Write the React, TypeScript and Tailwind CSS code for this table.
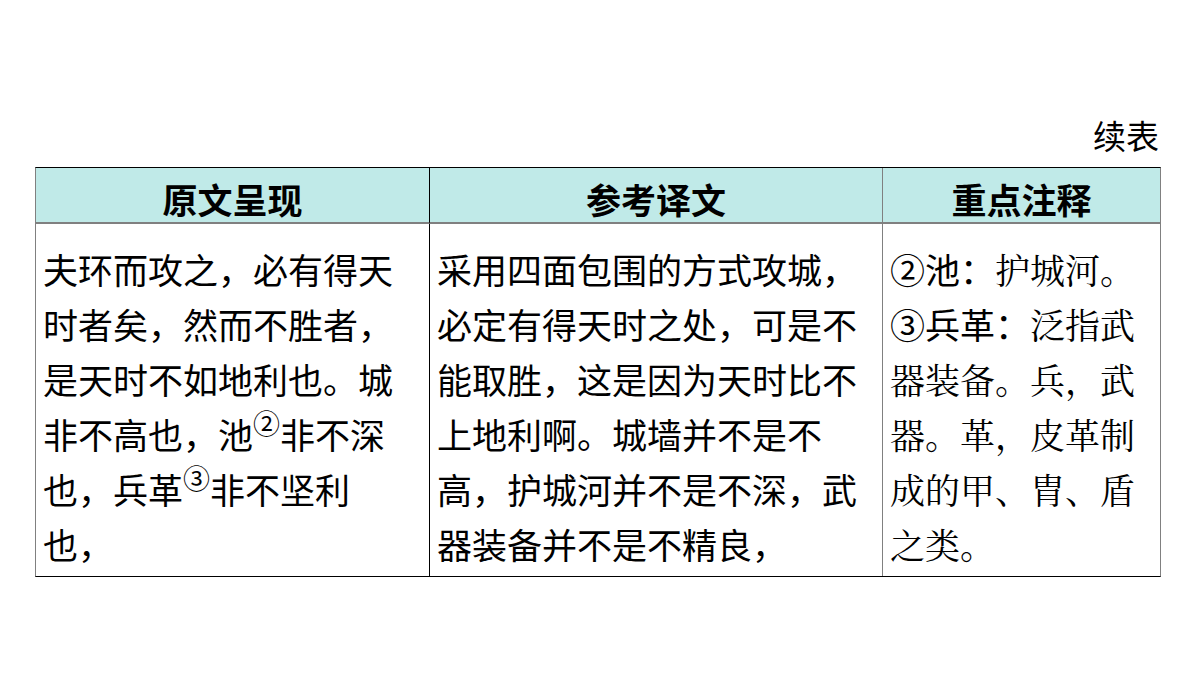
import React from 'react';

const sans = "font-['Microsoft_YaHei','Noto_Sans_CJK_SC',sans-serif]";
const kai = "font-['KaiTi','STKaiti','Noto_Serif_CJK_SC','Noto_Sans_CJK_SC',serif]";

const originalLines: React.ReactNode[] = [
  '夫环而攻之，必有得天',
  '时者矣，然而不胜者，',
  '是天时不如地利也。城',
  <>非不高也，池<sup className="text-[27px] align-top leading-none relative top-[3px]">②</sup>非不深</>,
  <>也，兵革<sup className="text-[27px] align-top leading-none relative top-[3px]">③</sup>非不坚利</>,
  '也，',
];

const translationLines = [
  '采用四面包围的方式攻城，',
  '必定有得天时之处，可是不',
  '能取胜，这是因为天时比不',
  '上地利啊。城墙并不是不',
  '高，护城河并不是不深，武',
  '器装备并不是不精良，',
];

const noteLines: React.ReactNode[] = [
  <><span className={sans}>②池：</span><span className={kai}>护城河。</span></>,
  <><span className={sans}>③兵革：</span><span className={kai}>泛指武</span></>,
  <span className={kai}>器装备。兵，武</span>,
  <span className={kai}>器。革，皮革制</span>,
  <span className={kai}>成的甲、胄、盾</span>,
  <span className={kai}>之类。</span>,
];

const Header: React.FC<{ title: string; last?: boolean; gray?: boolean }> = ({ title, last, gray }) => (
  <div
    className={`h-[56px] bg-[#c0eae8] border-b-2 border-b-[#808080] flex items-center justify-center pt-[6px] ${
      last ? '' : gray ? 'border-r border-r-[#808080]' : 'border-r border-r-black'
    }`}
  >
    <span className="text-[35px] font-bold leading-none text-black">{title}</span>
  </div>
);

const Body: React.FC<{ lines: React.ReactNode[]; last?: boolean; gray?: boolean }> = ({ lines, last, gray }) => (
  <div
    className={`h-[352px] pl-[7px] pt-[17px] ${
      last ? '' : gray ? 'border-r border-r-[#808080]' : 'border-r border-r-black'
    }`}
  >
    {lines.map((line, i) => (
      <div key={i} className="h-[55px] leading-[55px] text-[35px] text-black whitespace-nowrap">
        {line}
      </div>
    ))}
  </div>
);

const App: React.FC = () => {
  return (
    <div className={`w-[1200px] h-[675px] bg-white ${sans}`}>
      <div className="pt-[115px] ml-[35px] w-[1126px]">
        <div className="h-[40px] leading-[40px] text-[33px] text-right text-black pr-[2px]">续表</div>
        <div className="mt-[12px] border-t border-t-black border-b border-b-black border-x border-x-[#808080]">
          <div className="grid grid-cols-[394px_453px_277px]">
            <Header title="原文呈现" />
            <Header title="参考译文" gray />
            <Header title="重点注释" last />
            <Body lines={originalLines} />
            <Body lines={translationLines} gray />
            <Body lines={noteLines} last />
          </div>
        </div>
      </div>
    </div>
  );
};

export default App;
